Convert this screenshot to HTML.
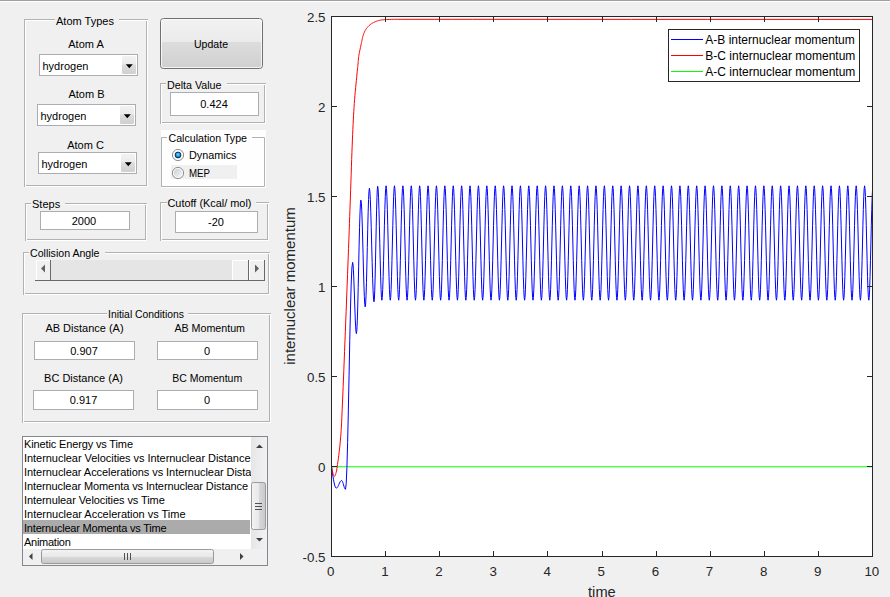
<!DOCTYPE html>
<html><head><meta charset="utf-8"><style>
html,body{margin:0;padding:0;width:890px;height:597px;overflow:hidden;background:#f0f0f0}
text{font-family:"Liberation Sans", sans-serif}
</style></head><body>
<svg width="890" height="597" viewBox="0 0 890 597" style="display:block">
<defs>
<linearGradient id="ddgrad" x1="0" y1="0" x2="0" y2="1">
<stop offset="0" stop-color="#f2f2f2"/><stop offset="0.45" stop-color="#ebebeb"/><stop offset="0.5" stop-color="#dddddd"/><stop offset="1" stop-color="#cfcfcf"/></linearGradient>
<linearGradient id="btngrad" x1="0" y1="0" x2="0" y2="1">
<stop offset="0" stop-color="#f2f2f2"/><stop offset="0.46" stop-color="#ebebeb"/><stop offset="0.47" stop-color="#dddddd"/><stop offset="1" stop-color="#cfcfcf"/></linearGradient>
<radialGradient id="rdot" cx="0.5" cy="0.4" r="0.6">
<stop offset="0" stop-color="#6cdcff"/><stop offset="0.6" stop-color="#2390d6"/><stop offset="1" stop-color="#15558f"/></radialGradient>
<linearGradient id="rgray" x1="0" y1="0" x2="1" y2="1">
<stop offset="0" stop-color="#c9cdd3"/><stop offset="1" stop-color="#f6f6f6"/></linearGradient>
<linearGradient id="sbv" x1="0" y1="0" x2="1" y2="0">
<stop offset="0" stop-color="#e6e6e6"/><stop offset="1" stop-color="#f2f2f2"/></linearGradient>
<linearGradient id="thumbv" x1="0" y1="0" x2="1" y2="0">
<stop offset="0" stop-color="#f4f4f4"/><stop offset="0.5" stop-color="#e8e8e8"/><stop offset="0.55" stop-color="#d8d8d8"/><stop offset="1" stop-color="#c8c8c8"/></linearGradient>
<linearGradient id="thumbh" x1="0" y1="0" x2="0" y2="1">
<stop offset="0" stop-color="#f4f4f4"/><stop offset="0.5" stop-color="#e8e8e8"/><stop offset="0.55" stop-color="#d8d8d8"/><stop offset="1" stop-color="#c8c8c8"/></linearGradient>
<clipPath id="axclip"><rect x="331" y="16" width="542" height="541"/></clipPath>
<clipPath id="lbclip"><rect x="23" y="437" width="228" height="112"/></clipPath>
</defs>
<rect x="0" y="0" width="890" height="597" fill="#f0f0f0" />
<rect x="0" y="0" width="890" height="1" fill="#a0a0a0" />
<rect x="0" y="1" width="890" height="1" fill="#ffffff" />
<rect x="25" y="20" width="122" height="1" fill="#ffffff"/>
<rect x="25" y="20" width="1" height="166" fill="#ffffff"/>
<rect x="25" y="186" width="123" height="1" fill="#ffffff"/>
<rect x="147" y="20" width="1" height="167" fill="#ffffff"/>
<rect x="24" y="19" width="124" height="1" fill="#b2b2b2"/>
<rect x="24" y="19" width="1" height="168" fill="#b2b2b2"/>
<rect x="26" y="185" width="121" height="1" fill="#b2b2b2"/>
<rect x="146" y="21" width="1" height="165" fill="#b2b2b2"/>
<rect x="55" y="18" width="64" height="4" fill="#f0f0f0" />
<text x="56" y="25" font-size="11" text-anchor="start" fill="#000" >Atom Types</text>
<text x="86" y="48" font-size="11" text-anchor="middle" fill="#000" >Atom A</text>
<rect x="39.5" y="54.5" width="98" height="21" fill="#fff" stroke="#abadb3" />
<rect x="122" y="56" width="14" height="18" rx="1.5" fill="url(#ddgrad)"/>
<path d="M125.80000000000001,64.3 L132.8,64.3 L129.3,68.3 Z" fill="#000"/>
<text x="42.5" y="70" font-size="11" text-anchor="start" fill="#000" >hydrogen</text>
<text x="86.5" y="98" font-size="11" text-anchor="middle" fill="#000" >Atom B</text>
<rect x="37.5" y="104.5" width="98" height="21" fill="#fff" stroke="#abadb3" />
<rect x="120" y="106" width="14" height="18" rx="1.5" fill="url(#ddgrad)"/>
<path d="M123.8,114.3 L130.8,114.3 L127.3,118.3 Z" fill="#000"/>
<text x="40.5" y="120" font-size="11" text-anchor="start" fill="#000" >hydrogen</text>
<text x="85.5" y="149" font-size="11" text-anchor="middle" fill="#000" >Atom C</text>
<rect x="38.5" y="152.5" width="98" height="21" fill="#fff" stroke="#abadb3" />
<rect x="121" y="154" width="14" height="18" rx="1.5" fill="url(#ddgrad)"/>
<path d="M124.80000000000001,162.3 L131.8,162.3 L128.3,166.3 Z" fill="#000"/>
<text x="41.5" y="168" font-size="11" text-anchor="start" fill="#000" >hydrogen</text>
<rect x="160.5" y="18.5" width="102" height="50" rx="3" fill="url(#btngrad)" stroke="#707070"/>
<rect x="161.5" y="19.5" width="100" height="48" rx="2" fill="none" stroke="#fcfcfc" stroke-opacity="0.8"/>
<text x="211" y="48" font-size="11" text-anchor="middle" fill="#000"  textLength="34" lengthAdjust="spacingAndGlyphs">Update</text>
<rect x="161" y="84" width="104" height="1" fill="#ffffff"/>
<rect x="161" y="84" width="1" height="39" fill="#ffffff"/>
<rect x="161" y="123" width="105" height="1" fill="#ffffff"/>
<rect x="265" y="84" width="1" height="40" fill="#ffffff"/>
<rect x="160" y="83" width="106" height="1" fill="#b2b2b2"/>
<rect x="160" y="83" width="1" height="41" fill="#b2b2b2"/>
<rect x="162" y="122" width="103" height="1" fill="#b2b2b2"/>
<rect x="264" y="85" width="1" height="38" fill="#b2b2b2"/>
<rect x="166" y="82" width="61" height="4" fill="#f0f0f0" />
<text x="167" y="89" font-size="11" text-anchor="start" fill="#000"  textLength="54.5" lengthAdjust="spacingAndGlyphs">Delta Value</text>
<rect x="170.5" y="92.5" width="88" height="23" fill="#fff" stroke="#abadb3" />
<text x="214" y="108" font-size="11" text-anchor="middle" fill="#000" >0.424</text>
<rect x="161" y="130" width="105" height="58" fill="#fefefe" />
<path d="M161.5,187 V137.5 H167 M252,137.5 H264.5 V186.5 H161" fill="none" stroke="#b2b2b2"/>
<text x="168.5" y="142" font-size="11" text-anchor="start" fill="#000"  textLength="78.5" lengthAdjust="spacingAndGlyphs">Calculation Type</text>
<rect x="171" y="165" width="66" height="14" fill="#f0f0f0" />
<circle cx="178" cy="155" r="5.6" fill="#fdfdfd" stroke="#8e8e8e"/>
<circle cx="178" cy="155" r="2.9" fill="url(#rdot)" stroke="#0c335e" stroke-width="1"/>
<text x="189" y="159" font-size="11" text-anchor="start" fill="#000"  textLength="47.5" lengthAdjust="spacingAndGlyphs">Dynamics</text>
<circle cx="178" cy="173" r="5.6" fill="#fdfdfd" stroke="#8e8e8e"/>
<circle cx="178" cy="173" r="4.2" fill="url(#rgray)"/>
<text x="189" y="177" font-size="11" text-anchor="start" fill="#000"  textLength="21" lengthAdjust="spacingAndGlyphs">MEP</text>
<rect x="26" y="204" width="120" height="1" fill="#ffffff"/>
<rect x="26" y="204" width="1" height="36" fill="#ffffff"/>
<rect x="26" y="240" width="121" height="1" fill="#ffffff"/>
<rect x="146" y="204" width="1" height="37" fill="#ffffff"/>
<rect x="25" y="203" width="122" height="1" fill="#b2b2b2"/>
<rect x="25" y="203" width="1" height="38" fill="#b2b2b2"/>
<rect x="27" y="239" width="119" height="1" fill="#b2b2b2"/>
<rect x="145" y="205" width="1" height="35" fill="#b2b2b2"/>
<rect x="31" y="202" width="34" height="4" fill="#f0f0f0" />
<text x="32" y="208" font-size="11" text-anchor="start" fill="#000" >Steps</text>
<rect x="40.5" y="211.5" width="89" height="18" fill="#fff" stroke="#abadb3" />
<text x="84" y="225" font-size="11" text-anchor="middle" fill="#000" >2000</text>
<rect x="161" y="203" width="107" height="1" fill="#ffffff"/>
<rect x="161" y="203" width="1" height="37" fill="#ffffff"/>
<rect x="161" y="240" width="108" height="1" fill="#ffffff"/>
<rect x="268" y="203" width="1" height="38" fill="#ffffff"/>
<rect x="160" y="202" width="109" height="1" fill="#b2b2b2"/>
<rect x="160" y="202" width="1" height="39" fill="#b2b2b2"/>
<rect x="162" y="239" width="106" height="1" fill="#b2b2b2"/>
<rect x="267" y="204" width="1" height="36" fill="#b2b2b2"/>
<rect x="167" y="201" width="89" height="4" fill="#f0f0f0" />
<text x="167.5" y="207" font-size="11" text-anchor="start" fill="#000"  textLength="84" lengthAdjust="spacingAndGlyphs">Cutoff (Kcal/ mol)</text>
<rect x="175.5" y="211.5" width="82" height="21" fill="#fff" stroke="#abadb3" />
<text x="216" y="226" font-size="11" text-anchor="middle" fill="#000" >-20</text>
<rect x="24" y="253" width="245" height="1" fill="#ffffff"/>
<rect x="24" y="253" width="1" height="41" fill="#ffffff"/>
<rect x="24" y="294" width="246" height="1" fill="#ffffff"/>
<rect x="269" y="253" width="1" height="42" fill="#ffffff"/>
<rect x="23" y="252" width="247" height="1" fill="#b2b2b2"/>
<rect x="23" y="252" width="1" height="43" fill="#b2b2b2"/>
<rect x="25" y="293" width="244" height="1" fill="#b2b2b2"/>
<rect x="268" y="254" width="1" height="40" fill="#b2b2b2"/>
<rect x="29" y="251" width="76" height="4" fill="#f0f0f0" />
<text x="30" y="257" font-size="11" text-anchor="start" fill="#000"  textLength="69.5" lengthAdjust="spacingAndGlyphs">Collision Angle</text>
<rect x="36" y="260" width="229" height="21" fill="#f0f0f0" />
<rect x="51" y="260" width="181" height="20" fill="#e5e5e5" />
<path d="M36.5,280 V260.5 H50" fill="none" stroke="#ffffff"/>
<path d="M36,280.5 H50.5 V260" fill="none" stroke="#696969"/>
<path d="M232.5,280 V260.5 H248" fill="none" stroke="#ffffff"/>
<path d="M232,280.5 H248.5 V260" fill="none" stroke="#696969"/>
<path d="M249.5,280 V260.5 H264" fill="none" stroke="#ffffff"/>
<path d="M249,280.5 H264.5 V260" fill="none" stroke="#696969"/>
<path d="M35,280.5 H265" stroke="#696969"/>
<path d="M41,268.5 L45,264.5 L45,272.5 Z" fill="#606060"/>
<path d="M259,268.5 L255,264.5 L255,272.5 Z" fill="#606060"/>
<rect x="23" y="314" width="247" height="1" fill="#ffffff"/>
<rect x="23" y="314" width="1" height="108" fill="#ffffff"/>
<rect x="23" y="422" width="248" height="1" fill="#ffffff"/>
<rect x="270" y="314" width="1" height="109" fill="#ffffff"/>
<rect x="22" y="313" width="249" height="1" fill="#b2b2b2"/>
<rect x="22" y="313" width="1" height="110" fill="#b2b2b2"/>
<rect x="24" y="421" width="246" height="1" fill="#b2b2b2"/>
<rect x="269" y="315" width="1" height="107" fill="#b2b2b2"/>
<rect x="107" y="312" width="81" height="4" fill="#f0f0f0" />
<text x="108" y="318" font-size="11" text-anchor="start" fill="#000"  textLength="76" lengthAdjust="spacingAndGlyphs">Initial Conditions</text>
<text x="84.5" y="332" font-size="11" text-anchor="middle" fill="#000" >AB Distance (A)</text>
<text x="209.7" y="332" font-size="11" text-anchor="middle" fill="#000"  textLength="70.6" lengthAdjust="spacingAndGlyphs">AB Momentum</text>
<rect x="34.5" y="341.5" width="100" height="18" fill="#fff" stroke="#abadb3" />
<text x="84" y="355" font-size="11" text-anchor="middle" fill="#000" >0.907</text>
<rect x="157.5" y="341.5" width="100" height="18" fill="#fff" stroke="#abadb3" />
<text x="207" y="355" font-size="11" text-anchor="middle" fill="#000" >0</text>
<text x="83.5" y="382" font-size="11" text-anchor="middle" fill="#000" >BC Distance (A)</text>
<text x="207.2" y="382" font-size="11" text-anchor="middle" fill="#000"  textLength="70" lengthAdjust="spacingAndGlyphs">BC Momentum</text>
<rect x="33.5" y="390.5" width="100" height="19" fill="#fff" stroke="#abadb3" />
<text x="83.5" y="404" font-size="11" text-anchor="middle" fill="#000" >0.917</text>
<rect x="157.5" y="390.5" width="100" height="19" fill="#fff" stroke="#abadb3" />
<text x="207" y="404" font-size="11" text-anchor="middle" fill="#000" >0</text>
<rect x="22.5" y="436.5" width="245" height="129" fill="#fff" stroke="#828790" />
<g clip-path="url(#lbclip)">
<rect x="23" y="520" width="227" height="14" fill="#ababab" />
<text x="24" y="448" font-size="11" fill="#000" textLength="109" lengthAdjust="spacing">Kinetic Energy vs Time</text>
<text x="24" y="462" font-size="11" fill="#000" textLength="226.5" lengthAdjust="spacing">Internuclear Velocities vs Internuclear Distance</text>
<text x="24" y="476" font-size="11" fill="#000" textLength="245" lengthAdjust="spacing">Internuclear Accelerations vs Internuclear Distance</text>
<text x="24" y="490" font-size="11" fill="#000" textLength="224" lengthAdjust="spacing">Internuclear Momenta vs Internuclear Distance</text>
<text x="24" y="504" font-size="11" fill="#000" textLength="140.8" lengthAdjust="spacing">Internulear Velocities vs Time</text>
<text x="24" y="518" font-size="11" fill="#000" textLength="161.5" lengthAdjust="spacing">Internuclear Acceleration vs Time</text>
<text x="24" y="532" font-size="11" fill="#000" textLength="142.7" lengthAdjust="spacing">Internuclear Momenta vs Time</text>
<text x="24" y="546" font-size="11" fill="#000" textLength="46.8" lengthAdjust="spacing">Animation</text>
</g>
<rect x="251" y="437" width="16" height="112" fill="url(#sbv)" />
<path d="M256,448 L259.5,444.5 L263,448 Z" fill="#404040"/>
<path d="M256,538 L259.5,541.5 L263,538 Z" fill="#404040"/>
<rect x="251.5" y="482.5" width="14" height="47" rx="2" fill="url(#thumbv)" stroke="#9a9a9a"/>
<path d="M255,503.5 H262" stroke="#505050" stroke-width="1"/>
<path d="M255,506.5 H262" stroke="#505050" stroke-width="1"/>
<path d="M255,509.5 H262" stroke="#505050" stroke-width="1"/>
<rect x="23" y="549" width="228" height="16" fill="#f0f0f0" />
<rect x="251" y="549" width="16" height="16" fill="#f0f0f0" />
<path d="M32.5,553 L29,556.5 L32.5,560 Z" fill="#404040"/>
<path d="M240,553 L243.5,556.5 L240,560 Z" fill="#404040"/>
<rect x="41.5" y="549.5" width="172" height="14" rx="2" fill="url(#thumbh)" stroke="#9a9a9a"/>
<path d="M124.5,553 V560" stroke="#505050" stroke-width="1"/>
<path d="M127.5,553 V560" stroke="#505050" stroke-width="1"/>
<path d="M130.5,553 V560" stroke="#505050" stroke-width="1"/>
<rect x="331.5" y="16.5" width="541" height="540" fill="#fff" />
<path d="M331.5,466.8 H872.5" stroke="#00ff00" stroke-width="1" fill="none" clip-path="url(#axclip)"/>
<g clip-path="url(#axclip)" fill="none" stroke-width="1" stroke-linejoin="round">
<path d="M331.50,466.50 L331.98,469.88 L332.46,473.17 L332.94,476.31 L333.42,479.20 L333.90,481.77 L334.38,483.97 L334.86,485.75 L335.34,487.04 L335.82,487.83 L336.30,488.10 L336.83,487.91 L337.36,487.37 L337.89,486.53 L338.42,485.47 L338.95,484.30 L339.48,483.13 L340.01,482.07 L340.54,481.23 L341.07,480.69 L341.60,480.50 L341.99,480.72 L342.38,481.34 L342.77,482.31 L343.16,483.54 L343.55,484.90 L343.94,486.26 L344.33,487.49 L344.72,488.46 L345.11,489.08 L345.50,489.30 L346.21,483.75 L346.92,467.63 L347.63,442.53 L348.34,410.91 L349.05,375.85 L349.76,340.79 L350.47,309.17 L351.18,284.07 L351.89,267.95 L352.60,262.40 L352.98,264.14 L353.36,269.20 L353.74,277.07 L354.12,287.00 L354.50,298.00 L354.88,309.00 L355.26,318.93 L355.64,326.80 L356.02,331.86 L356.40,333.60 L356.85,330.33 L357.30,320.85 L357.75,306.08 L358.20,287.48 L358.65,266.85 L359.10,246.22 L359.55,227.62 L360.00,212.85 L360.45,203.37 L360.90,200.10 L361.33,202.71 L361.76,210.30 L362.19,222.11 L362.62,237.00 L363.05,253.50 L363.48,270.00 L363.91,284.89 L364.34,296.70 L364.77,304.29 L365.20,306.90 L365.62,304.00 L366.04,295.57 L366.46,282.46 L366.88,265.92 L367.30,247.60 L367.72,229.28 L368.14,212.74 L368.56,199.63 L368.98,191.20 L369.40,188.30 L369.86,191.08 L370.32,199.14 L370.78,211.69 L371.24,227.51 L371.70,245.05 L372.16,262.59 L372.62,278.41 L373.08,290.96 L373.54,299.02 L374.00,301.80 L374.37,298.97 L374.74,290.77 L375.11,277.99 L375.48,261.90 L375.85,244.05 L376.22,226.20 L376.59,210.11 L376.96,197.33 L377.33,189.13 L377.70,186.30 L378.12,189.09 L378.54,197.18 L378.96,209.78 L379.38,225.65 L379.79,243.25 L380.21,260.85 L380.63,276.72 L381.05,289.32 L381.47,297.41 L381.89,300.20 L382.31,297.40 L382.73,289.28 L383.15,276.62 L383.57,260.68 L383.99,243.00 L384.41,225.32 L384.83,209.38 L385.25,196.72 L385.67,188.60 L386.08,185.80 L386.50,188.60 L386.92,196.72 L387.34,209.38 L387.76,225.32 L388.18,243.00 L388.60,260.68 L389.02,276.62 L389.44,289.28 L389.86,297.40 L390.28,300.20 L390.70,297.40 L391.12,289.28 L391.54,276.62 L391.96,260.68 L392.38,243.00 L392.80,225.32 L393.22,209.38 L393.64,196.72 L394.06,188.60 L394.48,185.80 L394.90,188.60 L395.32,196.72 L395.74,209.38 L396.16,225.32 L396.58,243.00 L397.00,260.68 L397.42,276.62 L397.84,289.28 L398.26,297.40 L398.68,300.20 L399.10,297.40 L399.52,289.28 L399.94,276.62 L400.36,260.68 L400.78,243.00 L401.20,225.32 L401.62,209.38 L402.04,196.72 L402.46,188.60 L402.88,185.80 L403.29,188.60 L403.71,196.72 L404.13,209.38 L404.55,225.32 L404.97,243.00 L405.39,260.68 L405.81,276.62 L406.23,289.28 L406.65,297.40 L407.07,300.20 L407.49,297.40 L407.91,289.28 L408.33,276.62 L408.75,260.68 L409.17,243.00 L409.59,225.32 L410.01,209.38 L410.43,196.72 L410.85,188.60 L411.27,185.80 L411.69,188.60 L412.11,196.72 L412.53,209.38 L412.95,225.32 L413.37,243.00 L413.79,260.68 L414.21,276.62 L414.63,289.28 L415.05,297.40 L415.47,300.20 L415.89,297.40 L416.31,289.28 L416.73,276.62 L417.15,260.68 L417.57,243.00 L417.99,225.32 L418.41,209.38 L418.83,196.72 L419.25,188.60 L419.66,185.80 L420.08,188.60 L420.50,196.72 L420.92,209.38 L421.34,225.32 L421.76,243.00 L422.18,260.68 L422.60,276.62 L423.02,289.28 L423.44,297.40 L423.86,300.20 L424.28,297.40 L424.70,289.28 L425.12,276.62 L425.54,260.68 L425.96,243.00 L426.38,225.32 L426.80,209.38 L427.22,196.72 L427.64,188.60 L428.06,185.80 L428.48,188.60 L428.90,196.72 L429.32,209.38 L429.74,225.32 L430.16,243.00 L430.58,260.68 L431.00,276.62 L431.42,289.28 L431.84,297.40 L432.26,300.20 L432.68,297.40 L433.10,289.28 L433.52,276.62 L433.94,260.68 L434.36,243.00 L434.78,225.32 L435.20,209.38 L435.62,196.72 L436.04,188.60 L436.45,185.80 L436.87,188.60 L437.29,196.72 L437.71,209.38 L438.13,225.32 L438.55,243.00 L438.97,260.68 L439.39,276.62 L439.81,289.28 L440.23,297.40 L440.65,300.20 L441.07,297.40 L441.49,289.28 L441.91,276.62 L442.33,260.68 L442.75,243.00 L443.17,225.32 L443.59,209.38 L444.01,196.72 L444.43,188.60 L444.85,185.80 L445.27,188.60 L445.69,196.72 L446.11,209.38 L446.53,225.32 L446.95,243.00 L447.37,260.68 L447.79,276.62 L448.21,289.28 L448.63,297.40 L449.05,300.20 L449.47,297.40 L449.89,289.28 L450.31,276.62 L450.73,260.68 L451.15,243.00 L451.57,225.32 L451.99,209.38 L452.41,196.72 L452.83,188.60 L453.25,185.80 L453.66,188.60 L454.08,196.72 L454.50,209.38 L454.92,225.32 L455.34,243.00 L455.76,260.68 L456.18,276.62 L456.60,289.28 L457.02,297.40 L457.44,300.20 L457.86,297.40 L458.28,289.28 L458.70,276.62 L459.12,260.68 L459.54,243.00 L459.96,225.32 L460.38,209.38 L460.80,196.72 L461.22,188.60 L461.64,185.80 L462.06,188.60 L462.48,196.72 L462.90,209.38 L463.32,225.32 L463.74,243.00 L464.16,260.68 L464.58,276.62 L465.00,289.28 L465.42,297.40 L465.84,300.20 L466.26,297.40 L466.68,289.28 L467.10,276.62 L467.52,260.68 L467.94,243.00 L468.36,225.32 L468.78,209.38 L469.20,196.72 L469.62,188.60 L470.03,185.80 L470.45,188.60 L470.87,196.72 L471.29,209.38 L471.71,225.32 L472.13,243.00 L472.55,260.68 L472.97,276.62 L473.39,289.28 L473.81,297.40 L474.23,300.20 L474.65,297.40 L475.07,289.28 L475.49,276.62 L475.91,260.68 L476.33,243.00 L476.75,225.32 L477.17,209.38 L477.59,196.72 L478.01,188.60 L478.43,185.80 L478.85,188.60 L479.27,196.72 L479.69,209.38 L480.11,225.32 L480.53,243.00 L480.95,260.68 L481.37,276.62 L481.79,289.28 L482.21,297.40 L482.63,300.20 L483.05,297.40 L483.47,289.28 L483.89,276.62 L484.31,260.68 L484.73,243.00 L485.15,225.32 L485.57,209.38 L485.99,196.72 L486.41,188.60 L486.82,185.80 L487.24,188.60 L487.66,196.72 L488.08,209.38 L488.50,225.32 L488.92,243.00 L489.34,260.68 L489.76,276.62 L490.18,289.28 L490.60,297.40 L491.02,300.20 L491.44,297.40 L491.86,289.28 L492.28,276.62 L492.70,260.68 L493.12,243.00 L493.54,225.32 L493.96,209.38 L494.38,196.72 L494.80,188.60 L495.22,185.80 L495.64,188.60 L496.06,196.72 L496.48,209.38 L496.90,225.32 L497.32,243.00 L497.74,260.68 L498.16,276.62 L498.58,289.28 L499.00,297.40 L499.42,300.20 L499.84,297.40 L500.26,289.28 L500.68,276.62 L501.10,260.68 L501.52,243.00 L501.94,225.32 L502.36,209.38 L502.78,196.72 L503.20,188.60 L503.62,185.80 L504.03,188.60 L504.45,196.72 L504.87,209.38 L505.29,225.32 L505.71,243.00 L506.13,260.68 L506.55,276.62 L506.97,289.28 L507.39,297.40 L507.81,300.20 L508.23,297.40 L508.65,289.28 L509.07,276.62 L509.49,260.68 L509.91,243.00 L510.33,225.32 L510.75,209.38 L511.17,196.72 L511.59,188.60 L512.01,185.80 L512.43,188.60 L512.85,196.72 L513.27,209.38 L513.69,225.32 L514.11,243.00 L514.53,260.68 L514.95,276.62 L515.37,289.28 L515.79,297.40 L516.21,300.20 L516.63,297.40 L517.05,289.28 L517.47,276.62 L517.89,260.68 L518.31,243.00 L518.73,225.32 L519.15,209.38 L519.57,196.72 L519.99,188.60 L520.40,185.80 L520.82,188.60 L521.24,196.72 L521.66,209.38 L522.08,225.32 L522.50,243.00 L522.92,260.68 L523.34,276.62 L523.76,289.28 L524.18,297.40 L524.60,300.20 L525.02,297.40 L525.44,289.28 L525.86,276.62 L526.28,260.68 L526.70,243.00 L527.12,225.32 L527.54,209.38 L527.96,196.72 L528.38,188.60 L528.80,185.80 L529.22,188.60 L529.64,196.72 L530.06,209.38 L530.48,225.32 L530.90,243.00 L531.32,260.68 L531.74,276.62 L532.16,289.28 L532.58,297.40 L533.00,300.20 L533.42,297.40 L533.84,289.28 L534.26,276.62 L534.68,260.68 L535.10,243.00 L535.52,225.32 L535.94,209.38 L536.36,196.72 L536.78,188.60 L537.19,185.80 L537.61,188.60 L538.03,196.72 L538.45,209.38 L538.87,225.32 L539.29,243.00 L539.71,260.68 L540.13,276.62 L540.55,289.28 L540.97,297.40 L541.39,300.20 L541.81,297.40 L542.23,289.28 L542.65,276.62 L543.07,260.68 L543.49,243.00 L543.91,225.32 L544.33,209.38 L544.75,196.72 L545.17,188.60 L545.59,185.80 L546.01,188.60 L546.43,196.72 L546.85,209.38 L547.27,225.32 L547.69,243.00 L548.11,260.68 L548.53,276.62 L548.95,289.28 L549.37,297.40 L549.79,300.20 L550.21,297.40 L550.63,289.28 L551.05,276.62 L551.47,260.68 L551.89,243.00 L552.31,225.32 L552.73,209.38 L553.15,196.72 L553.57,188.60 L553.98,185.80 L554.40,188.60 L554.82,196.72 L555.24,209.38 L555.66,225.32 L556.08,243.00 L556.50,260.68 L556.92,276.62 L557.34,289.28 L557.76,297.40 L558.18,300.20 L558.60,297.40 L559.02,289.28 L559.44,276.62 L559.86,260.68 L560.28,243.00 L560.70,225.32 L561.12,209.38 L561.54,196.72 L561.96,188.60 L562.38,185.80 L562.80,188.60 L563.22,196.72 L563.64,209.38 L564.06,225.32 L564.48,243.00 L564.90,260.68 L565.32,276.62 L565.74,289.28 L566.16,297.40 L566.58,300.20 L567.00,297.40 L567.42,289.28 L567.84,276.62 L568.26,260.68 L568.68,243.00 L569.10,225.32 L569.52,209.38 L569.94,196.72 L570.36,188.60 L570.77,185.80 L571.19,188.60 L571.61,196.72 L572.03,209.38 L572.45,225.32 L572.87,243.00 L573.29,260.68 L573.71,276.62 L574.13,289.28 L574.55,297.40 L574.97,300.20 L575.39,297.40 L575.81,289.28 L576.23,276.62 L576.65,260.68 L577.07,243.00 L577.49,225.32 L577.91,209.38 L578.33,196.72 L578.75,188.60 L579.17,185.80 L579.59,188.60 L580.01,196.72 L580.43,209.38 L580.85,225.32 L581.27,243.00 L581.69,260.68 L582.11,276.62 L582.53,289.28 L582.95,297.40 L583.37,300.20 L583.79,297.40 L584.21,289.28 L584.63,276.62 L585.05,260.68 L585.47,243.00 L585.89,225.32 L586.31,209.38 L586.73,196.72 L587.15,188.60 L587.56,185.80 L587.98,188.60 L588.40,196.72 L588.82,209.38 L589.24,225.32 L589.66,243.00 L590.08,260.68 L590.50,276.62 L590.92,289.28 L591.34,297.40 L591.76,300.20 L592.18,297.40 L592.60,289.28 L593.02,276.62 L593.44,260.68 L593.86,243.00 L594.28,225.32 L594.70,209.38 L595.12,196.72 L595.54,188.60 L595.96,185.80 L596.38,188.60 L596.80,196.72 L597.22,209.38 L597.64,225.32 L598.06,243.00 L598.48,260.68 L598.90,276.62 L599.32,289.28 L599.74,297.40 L600.16,300.20 L600.58,297.40 L601.00,289.28 L601.42,276.62 L601.84,260.68 L602.26,243.00 L602.68,225.32 L603.10,209.38 L603.52,196.72 L603.94,188.60 L604.36,185.80 L604.77,188.60 L605.19,196.72 L605.61,209.38 L606.03,225.32 L606.45,243.00 L606.87,260.68 L607.29,276.62 L607.71,289.28 L608.13,297.40 L608.55,300.20 L608.97,297.40 L609.39,289.28 L609.81,276.62 L610.23,260.68 L610.65,243.00 L611.07,225.32 L611.49,209.38 L611.91,196.72 L612.33,188.60 L612.75,185.80 L613.17,188.60 L613.59,196.72 L614.01,209.38 L614.43,225.32 L614.85,243.00 L615.27,260.68 L615.69,276.62 L616.11,289.28 L616.53,297.40 L616.95,300.20 L617.37,297.40 L617.79,289.28 L618.21,276.62 L618.63,260.68 L619.05,243.00 L619.47,225.32 L619.89,209.38 L620.31,196.72 L620.73,188.60 L621.14,185.80 L621.56,188.60 L621.98,196.72 L622.40,209.38 L622.82,225.32 L623.24,243.00 L623.66,260.68 L624.08,276.62 L624.50,289.28 L624.92,297.40 L625.34,300.20 L625.76,297.40 L626.18,289.28 L626.60,276.62 L627.02,260.68 L627.44,243.00 L627.86,225.32 L628.28,209.38 L628.70,196.72 L629.12,188.60 L629.54,185.80 L629.96,188.60 L630.38,196.72 L630.80,209.38 L631.22,225.32 L631.64,243.00 L632.06,260.68 L632.48,276.62 L632.90,289.28 L633.32,297.40 L633.74,300.20 L634.16,297.40 L634.58,289.28 L635.00,276.62 L635.42,260.68 L635.84,243.00 L636.26,225.32 L636.68,209.38 L637.10,196.72 L637.52,188.60 L637.93,185.80 L638.35,188.60 L638.77,196.72 L639.19,209.38 L639.61,225.32 L640.03,243.00 L640.45,260.68 L640.87,276.62 L641.29,289.28 L641.71,297.40 L642.13,300.20 L642.55,297.40 L642.97,289.28 L643.39,276.62 L643.81,260.68 L644.23,243.00 L644.65,225.32 L645.07,209.38 L645.49,196.72 L645.91,188.60 L646.33,185.80 L646.75,188.60 L647.17,196.72 L647.59,209.38 L648.01,225.32 L648.43,243.00 L648.85,260.68 L649.27,276.62 L649.69,289.28 L650.11,297.40 L650.53,300.20 L650.95,297.40 L651.37,289.28 L651.79,276.62 L652.21,260.68 L652.63,243.00 L653.05,225.32 L653.47,209.38 L653.89,196.72 L654.31,188.60 L654.72,185.80 L655.14,188.60 L655.56,196.72 L655.98,209.38 L656.40,225.32 L656.82,243.00 L657.24,260.68 L657.66,276.62 L658.08,289.28 L658.50,297.40 L658.92,300.20 L659.34,297.40 L659.76,289.28 L660.18,276.62 L660.60,260.68 L661.02,243.00 L661.44,225.32 L661.86,209.38 L662.28,196.72 L662.70,188.60 L663.12,185.80 L663.54,188.60 L663.96,196.72 L664.38,209.38 L664.80,225.32 L665.22,243.00 L665.64,260.68 L666.06,276.62 L666.48,289.28 L666.90,297.40 L667.32,300.20 L667.74,297.40 L668.16,289.28 L668.58,276.62 L669.00,260.68 L669.42,243.00 L669.84,225.32 L670.26,209.38 L670.68,196.72 L671.10,188.60 L671.51,185.80 L671.93,188.60 L672.35,196.72 L672.77,209.38 L673.19,225.32 L673.61,243.00 L674.03,260.68 L674.45,276.62 L674.87,289.28 L675.29,297.40 L675.71,300.20 L676.13,297.40 L676.55,289.28 L676.97,276.62 L677.39,260.68 L677.81,243.00 L678.23,225.32 L678.65,209.38 L679.07,196.72 L679.49,188.60 L679.91,185.80 L680.33,188.60 L680.75,196.72 L681.17,209.38 L681.59,225.32 L682.01,243.00 L682.43,260.68 L682.85,276.62 L683.27,289.28 L683.69,297.40 L684.11,300.20 L684.53,297.40 L684.95,289.28 L685.37,276.62 L685.79,260.68 L686.21,243.00 L686.63,225.32 L687.05,209.38 L687.47,196.72 L687.89,188.60 L688.30,185.80 L688.72,188.60 L689.14,196.72 L689.56,209.38 L689.98,225.32 L690.40,243.00 L690.82,260.68 L691.24,276.62 L691.66,289.28 L692.08,297.40 L692.50,300.20 L692.92,297.40 L693.34,289.28 L693.76,276.62 L694.18,260.68 L694.60,243.00 L695.02,225.32 L695.44,209.38 L695.86,196.72 L696.28,188.60 L696.70,185.80 L697.12,188.60 L697.54,196.72 L697.96,209.38 L698.38,225.32 L698.80,243.00 L699.22,260.68 L699.64,276.62 L700.06,289.28 L700.48,297.40 L700.90,300.20 L701.32,297.40 L701.74,289.28 L702.16,276.62 L702.58,260.68 L703.00,243.00 L703.42,225.32 L703.84,209.38 L704.26,196.72 L704.68,188.60 L705.10,185.80 L705.51,188.60 L705.93,196.72 L706.35,209.38 L706.77,225.32 L707.19,243.00 L707.61,260.68 L708.03,276.62 L708.45,289.28 L708.87,297.40 L709.29,300.20 L709.71,297.40 L710.13,289.28 L710.55,276.62 L710.97,260.68 L711.39,243.00 L711.81,225.32 L712.23,209.38 L712.65,196.72 L713.07,188.60 L713.49,185.80 L713.91,188.60 L714.33,196.72 L714.75,209.38 L715.17,225.32 L715.59,243.00 L716.01,260.68 L716.43,276.62 L716.85,289.28 L717.27,297.40 L717.69,300.20 L718.11,297.40 L718.53,289.28 L718.95,276.62 L719.37,260.68 L719.79,243.00 L720.21,225.32 L720.63,209.38 L721.05,196.72 L721.47,188.60 L721.88,185.80 L722.30,188.60 L722.72,196.72 L723.14,209.38 L723.56,225.32 L723.98,243.00 L724.40,260.68 L724.82,276.62 L725.24,289.28 L725.66,297.40 L726.08,300.20 L726.50,297.40 L726.92,289.28 L727.34,276.62 L727.76,260.68 L728.18,243.00 L728.60,225.32 L729.02,209.38 L729.44,196.72 L729.86,188.60 L730.28,185.80 L730.70,188.60 L731.12,196.72 L731.54,209.38 L731.96,225.32 L732.38,243.00 L732.80,260.68 L733.22,276.62 L733.64,289.28 L734.06,297.40 L734.48,300.20 L734.90,297.40 L735.32,289.28 L735.74,276.62 L736.16,260.68 L736.58,243.00 L737.00,225.32 L737.42,209.38 L737.84,196.72 L738.26,188.60 L738.67,185.80 L739.09,188.60 L739.51,196.72 L739.93,209.38 L740.35,225.32 L740.77,243.00 L741.19,260.68 L741.61,276.62 L742.03,289.28 L742.45,297.40 L742.87,300.20 L743.29,297.40 L743.71,289.28 L744.13,276.62 L744.55,260.68 L744.97,243.00 L745.39,225.32 L745.81,209.38 L746.23,196.72 L746.65,188.60 L747.07,185.80 L747.49,188.60 L747.91,196.72 L748.33,209.38 L748.75,225.32 L749.17,243.00 L749.59,260.68 L750.01,276.62 L750.43,289.28 L750.85,297.40 L751.27,300.20 L751.69,297.40 L752.11,289.28 L752.53,276.62 L752.95,260.68 L753.37,243.00 L753.79,225.32 L754.21,209.38 L754.63,196.72 L755.05,188.60 L755.46,185.80 L755.88,188.60 L756.30,196.72 L756.72,209.38 L757.14,225.32 L757.56,243.00 L757.98,260.68 L758.40,276.62 L758.82,289.28 L759.24,297.40 L759.66,300.20 L760.08,297.40 L760.50,289.28 L760.92,276.62 L761.34,260.68 L761.76,243.00 L762.18,225.32 L762.60,209.38 L763.02,196.72 L763.44,188.60 L763.86,185.80 L764.28,188.60 L764.70,196.72 L765.12,209.38 L765.54,225.32 L765.96,243.00 L766.38,260.68 L766.80,276.62 L767.22,289.28 L767.64,297.40 L768.06,300.20 L768.48,297.40 L768.90,289.28 L769.32,276.62 L769.74,260.68 L770.16,243.00 L770.58,225.32 L771.00,209.38 L771.42,196.72 L771.84,188.60 L772.25,185.80 L772.67,188.60 L773.09,196.72 L773.51,209.38 L773.93,225.32 L774.35,243.00 L774.77,260.68 L775.19,276.62 L775.61,289.28 L776.03,297.40 L776.45,300.20 L776.87,297.40 L777.29,289.28 L777.71,276.62 L778.13,260.68 L778.55,243.00 L778.97,225.32 L779.39,209.38 L779.81,196.72 L780.23,188.60 L780.65,185.80 L781.07,188.60 L781.49,196.72 L781.91,209.38 L782.33,225.32 L782.75,243.00 L783.17,260.68 L783.59,276.62 L784.01,289.28 L784.43,297.40 L784.85,300.20 L785.27,297.40 L785.69,289.28 L786.11,276.62 L786.53,260.68 L786.95,243.00 L787.37,225.32 L787.79,209.38 L788.21,196.72 L788.63,188.60 L789.04,185.80 L789.46,188.60 L789.88,196.72 L790.30,209.38 L790.72,225.32 L791.14,243.00 L791.56,260.68 L791.98,276.62 L792.40,289.28 L792.82,297.40 L793.24,300.20 L793.66,297.40 L794.08,289.28 L794.50,276.62 L794.92,260.68 L795.34,243.00 L795.76,225.32 L796.18,209.38 L796.60,196.72 L797.02,188.60 L797.44,185.80 L797.86,188.60 L798.28,196.72 L798.70,209.38 L799.12,225.32 L799.54,243.00 L799.96,260.68 L800.38,276.62 L800.80,289.28 L801.22,297.40 L801.64,300.20 L802.06,297.40 L802.48,289.28 L802.90,276.62 L803.32,260.68 L803.74,243.00 L804.16,225.32 L804.58,209.38 L805.00,196.72 L805.42,188.60 L805.84,185.80 L806.25,188.60 L806.67,196.72 L807.09,209.38 L807.51,225.32 L807.93,243.00 L808.35,260.68 L808.77,276.62 L809.19,289.28 L809.61,297.40 L810.03,300.20 L810.45,297.40 L810.87,289.28 L811.29,276.62 L811.71,260.68 L812.13,243.00 L812.55,225.32 L812.97,209.38 L813.39,196.72 L813.81,188.60 L814.23,185.80 L814.65,188.60 L815.07,196.72 L815.49,209.38 L815.91,225.32 L816.33,243.00 L816.75,260.68 L817.17,276.62 L817.59,289.28 L818.01,297.40 L818.43,300.20 L818.85,297.40 L819.27,289.28 L819.69,276.62 L820.11,260.68 L820.53,243.00 L820.95,225.32 L821.37,209.38 L821.79,196.72 L822.21,188.60 L822.62,185.80 L823.04,188.60 L823.46,196.72 L823.88,209.38 L824.30,225.32 L824.72,243.00 L825.14,260.68 L825.56,276.62 L825.98,289.28 L826.40,297.40 L826.82,300.20 L827.24,297.40 L827.66,289.28 L828.08,276.62 L828.50,260.68 L828.92,243.00 L829.34,225.32 L829.76,209.38 L830.18,196.72 L830.60,188.60 L831.02,185.80 L831.44,188.60 L831.86,196.72 L832.28,209.38 L832.70,225.32 L833.12,243.00 L833.54,260.68 L833.96,276.62 L834.38,289.28 L834.80,297.40 L835.22,300.20 L835.64,297.40 L836.06,289.28 L836.48,276.62 L836.90,260.68 L837.32,243.00 L837.74,225.32 L838.16,209.38 L838.58,196.72 L839.00,188.60 L839.41,185.80 L839.83,188.60 L840.25,196.72 L840.67,209.38 L841.09,225.32 L841.51,243.00 L841.93,260.68 L842.35,276.62 L842.77,289.28 L843.19,297.40 L843.61,300.20 L844.03,297.40 L844.45,289.28 L844.87,276.62 L845.29,260.68 L845.71,243.00 L846.13,225.32 L846.55,209.38 L846.97,196.72 L847.39,188.60 L847.81,185.80 L848.23,188.60 L848.65,196.72 L849.07,209.38 L849.49,225.32 L849.91,243.00 L850.33,260.68 L850.75,276.62 L851.17,289.28 L851.59,297.40 L852.01,300.20 L852.43,297.40 L852.85,289.28 L853.27,276.62 L853.69,260.68 L854.11,243.00 L854.53,225.32 L854.95,209.38 L855.37,196.72 L855.79,188.60 L856.20,185.80 L856.62,188.60 L857.04,196.72 L857.46,209.38 L857.88,225.32 L858.30,243.00 L858.72,260.68 L859.14,276.62 L859.56,289.28 L859.98,297.40 L860.40,300.20 L860.82,297.40 L861.24,289.28 L861.66,276.62 L862.08,260.68 L862.50,243.00 L862.92,225.32 L863.34,209.38 L863.76,196.72 L864.18,188.60 L864.60,185.80 L865.02,188.60 L865.44,196.72 L865.86,209.38 L866.28,225.32 L866.70,243.00 L867.12,260.68 L867.54,276.62 L867.96,289.28 L868.38,297.40 L868.80,300.20 L869.22,297.40 L869.64,289.28 L870.06,276.62 L870.48,260.68 L870.90,243.00 L871.32,225.32 L871.74,209.38 L872.16,196.72 L872.58,188.60 L873.00,185.80 L873.41,188.60 L873.83,196.72 L874.25,209.38 L874.67,225.32 L875.09,243.00 L875.51,260.68 L875.93,276.62 L876.35,289.28 L876.77,297.40 L877.19,300.20 L877.61,297.40 L878.03,289.28 L878.45,276.62 L878.87,260.68 L879.29,243.00 L879.71,225.32 L880.13,209.38 L880.55,196.72 L880.97,188.60 L881.39,185.80 L881.81,188.60 L882.23,196.72 L882.65,209.38 L883.07,225.32 L883.49,243.00 L883.91,260.68 L884.33,276.62 L884.75,289.28 L885.17,297.40 L885.59,300.20 L886.01,297.40 L886.43,289.28 L886.85,276.62 L887.27,260.68 L887.69,243.00 L888.11,225.32 L888.53,209.38 L888.95,196.72 L889.37,188.60 L889.78,185.80 L890.20,188.60 L890.62,196.72 L891.04,209.38 L891.46,225.32 L891.88,243.00 L892.30,260.68 L892.72,276.62 L893.14,289.28 L893.56,297.40 L893.98,300.20 L894.40,297.40 L894.82,289.28 L895.24,276.62 L895.66,260.68 L896.08,243.00 L896.50,225.32 L896.92,209.38 L897.34,196.72 L897.76,188.60 L898.18,185.80" stroke="#0000ff"/>
<path d="M331.50,466.50 L331.62,467.07 L331.77,467.85 L331.96,468.79 L332.17,469.82 L332.39,470.87 L332.60,471.87 L332.81,472.77 L333.00,473.50 L333.17,474.09 L333.34,474.64 L333.50,475.12 L333.66,475.54 L333.81,475.88 L333.97,476.14 L334.13,476.32 L334.30,476.40 L334.47,476.39 L334.64,476.29 L334.81,476.10 L334.99,475.84 L335.16,475.49 L335.34,475.07 L335.52,474.57 L335.70,474.00 L335.87,473.45 L336.03,472.97 L336.18,472.47 L336.34,471.87 L336.51,471.07 L336.70,470.00 L336.93,468.57 L337.20,466.70 L337.53,464.38 L337.90,461.70 L338.32,458.69 L338.76,455.39 L339.20,451.84 L339.63,448.06 L340.04,444.11 L340.40,440.00 L340.70,436.32 L340.94,433.28 L341.15,430.37 L341.36,427.08 L341.58,422.91 L341.84,417.34 L342.17,409.88 L342.60,400.00 L343.15,386.76 L343.82,370.23 L344.56,351.44 L345.34,331.44 L346.13,311.25 L346.87,291.93 L347.54,274.50 L348.10,260.00 L348.54,248.40 L348.91,238.70 L349.21,230.47 L349.47,223.31 L349.70,216.80 L349.92,210.52 L350.15,204.06 L350.40,197.00 L350.67,189.45 L350.92,181.85 L351.18,174.28 L351.42,166.84 L351.67,159.61 L351.91,152.67 L352.16,146.10 L352.40,140.00 L352.64,134.40 L352.87,129.25 L353.09,124.46 L353.31,119.97 L353.54,115.70 L353.78,111.58 L354.03,107.54 L354.30,103.50 L354.60,99.43 L354.94,95.37 L355.29,91.40 L355.66,87.58 L356.01,83.96 L356.35,80.62 L356.65,77.61 L356.90,75.00 L357.10,72.89 L357.26,71.26 L357.39,70.00 L357.50,69.00 L357.60,68.14 L357.69,67.31 L357.79,66.40 L357.90,65.30 L358.02,64.07 L358.12,62.84 L358.21,61.61 L358.31,60.37 L358.42,59.11 L358.55,57.84 L358.71,56.54 L358.90,55.20 L359.14,53.79 L359.42,52.30 L359.74,50.76 L360.07,49.21 L360.40,47.68 L360.73,46.21 L361.03,44.84 L361.30,43.60 L361.53,42.50 L361.72,41.50 L361.89,40.59 L362.06,39.75 L362.22,38.95 L362.39,38.17 L362.58,37.40 L362.80,36.60 L363.04,35.79 L363.30,34.98 L363.57,34.19 L363.86,33.41 L364.15,32.66 L364.46,31.94 L364.77,31.25 L365.10,30.60 L365.43,30.00 L365.78,29.44 L366.13,28.92 L366.49,28.43 L366.87,27.96 L367.26,27.50 L367.67,27.05 L368.10,26.60 L368.55,26.15 L369.01,25.70 L369.48,25.27 L369.98,24.84 L370.48,24.43 L371.01,24.04 L371.55,23.66 L372.10,23.30 L372.68,22.96 L373.28,22.63 L373.90,22.31 L374.53,22.01 L375.17,21.73 L375.82,21.47 L376.46,21.22 L377.10,21.00 L377.70,20.80 L378.26,20.63 L378.81,20.47 L379.37,20.34 L379.96,20.22 L380.61,20.10 L381.35,20.00 L382.20,19.90 L383.05,19.81 L383.82,19.72 L384.61,19.65 L385.50,19.59 L386.57,19.53 L387.90,19.48 L389.58,19.44 L391.70,19.40 L393.30,19.37 L393.90,19.34 L394.27,19.33 L395.19,19.32 L397.45,19.31 L401.82,19.31 L409.07,19.30 L420.00,19.30 L434.61,19.30 L452.18,19.30 L472.35,19.31 L494.77,19.32 L519.10,19.32 L544.98,19.33 L572.06,19.34 L600.00,19.35 L631.46,19.36 L667.91,19.36 L707.21,19.37 L747.25,19.38 L785.88,19.38 L820.97,19.39 L850.39,19.40 L872.00,19.40" stroke="#ff0000"/>
</g>
<rect x="331.5" y="16.5" width="541" height="540" fill="none" stroke="#262626"/>
<path d="M331.5,556 V551 M331.5,17 V22 M385.5,556 V551 M385.5,17 V22 M439.5,556 V551 M439.5,17 V22 M493.5,556 V551 M493.5,17 V22 M547.5,556 V551 M547.5,17 V22 M602.5,556 V551 M602.5,17 V22 M656.5,556 V551 M656.5,17 V22 M710.5,556 V551 M710.5,17 V22 M764.5,556 V551 M764.5,17 V22 M818.5,556 V551 M818.5,17 V22 M872.5,556 V551 M872.5,17 V22 M332,556.5 H337 M872,556.5 H867 M332,466.5 H337 M872,466.5 H867 M332,376.5 H337 M872,376.5 H867 M332,286.5 H337 M872,286.5 H867 M332,196.5 H337 M872,196.5 H867 M332,106.5 H337 M872,106.5 H867 M332,16.5 H337 M872,16.5 H867" stroke="#262626" fill="none"/>
<text x="330.8" y="576" font-size="13.33" text-anchor="middle" fill="#262626" >0</text>
<text x="384.9" y="576" font-size="13.33" text-anchor="middle" fill="#262626" >1</text>
<text x="439.0" y="576" font-size="13.33" text-anchor="middle" fill="#262626" >2</text>
<text x="493.1" y="576" font-size="13.33" text-anchor="middle" fill="#262626" >3</text>
<text x="547.2" y="576" font-size="13.33" text-anchor="middle" fill="#262626" >4</text>
<text x="601.3" y="576" font-size="13.33" text-anchor="middle" fill="#262626" >5</text>
<text x="655.4" y="576" font-size="13.33" text-anchor="middle" fill="#262626" >6</text>
<text x="709.5" y="576" font-size="13.33" text-anchor="middle" fill="#262626" >7</text>
<text x="763.6" y="576" font-size="13.33" text-anchor="middle" fill="#262626" >8</text>
<text x="817.7" y="576" font-size="13.33" text-anchor="middle" fill="#262626" >9</text>
<text x="871.8" y="576" font-size="13.33" text-anchor="middle" fill="#262626" >10</text>
<text x="325.5" y="562.2" font-size="13.33" text-anchor="end" fill="#262626" >-0.5</text>
<text x="325.5" y="472.2" font-size="13.33" text-anchor="end" fill="#262626" >0</text>
<text x="325.5" y="382.2" font-size="13.33" text-anchor="end" fill="#262626" >0.5</text>
<text x="325.5" y="292.2" font-size="13.33" text-anchor="end" fill="#262626" >1</text>
<text x="325.5" y="202.2" font-size="13.33" text-anchor="end" fill="#262626" >1.5</text>
<text x="325.5" y="112.2" font-size="13.33" text-anchor="end" fill="#262626" >2</text>
<text x="325.5" y="22.2" font-size="13.33" text-anchor="end" fill="#262626" >2.5</text>
<text x="601.9" y="596.5" font-size="14.67" text-anchor="middle" fill="#262626" >time</text>
<text x="0" y="0" font-size="15" text-anchor="middle" fill="#262626" transform="translate(295,286) rotate(-90)">internuclear momentum</text>
<rect x="668.5" y="29.5" width="191" height="52" fill="#fff" stroke="#262626" />
<path d="M671,39.5 H703" stroke="#0000ff" stroke-width="1"/>
<text x="705.3" y="43.8" font-size="12" text-anchor="start" fill="#000" >A-B internuclear momentum</text>
<path d="M671,55.5 H703" stroke="#ff0000" stroke-width="1"/>
<text x="705.3" y="60.0" font-size="12" text-anchor="start" fill="#000" >B-C internuclear momentum</text>
<path d="M671,71.5 H703" stroke="#00ff00" stroke-width="1"/>
<text x="705.3" y="76.19999999999999" font-size="12" text-anchor="start" fill="#000" >A-C internuclear momentum</text>
</svg>
</body></html>
